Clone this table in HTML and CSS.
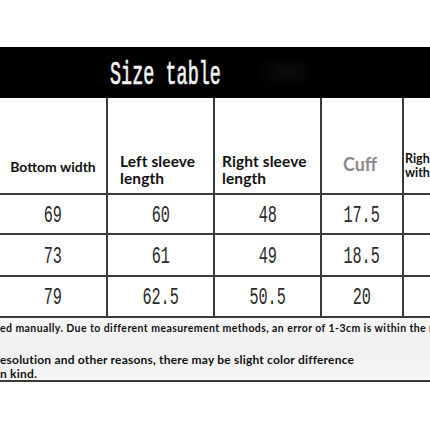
FILE: index.html
```html
<!DOCTYPE html>
<html>
<head>
<meta charset="utf-8">
<link rel="stylesheet" href="styles.css">
</head>
<body>
<div class="page">
  <div class="spacer"></div>
  <div class="titlebar"><span class="title">Size table</span><span class="smudge"></span></div>
  <div class="grid">
    <div class="cell head c1"><span class="h-sm">Bottom width</span></div>
    <div class="cell head c2"><span class="h-md">Left sleeve<br>length</span></div>
    <div class="cell head c3"><span class="h-md">Right sleeve<br>length</span></div>
    <div class="cell head c4"><span class="h-cuff">Cuff</span></div>
    <div class="cell head c5"><span class="h-xs">Righ<br>with</span></div>

    <div class="cell num"><span class="d">69</span></div>
    <div class="cell num"><span class="d">60</span></div>
    <div class="cell num"><span class="d">48</span></div>
    <div class="cell num"><span class="d">17.5</span></div>
    <div class="cell num"></div>

    <div class="cell num"><span class="d">73</span></div>
    <div class="cell num"><span class="d">61</span></div>
    <div class="cell num"><span class="d">49</span></div>
    <div class="cell num"><span class="d">18.5</span></div>
    <div class="cell num"></div>

    <div class="cell num"><span class="d">79</span></div>
    <div class="cell num"><span class="d">62.5</span></div>
    <div class="cell num"><span class="d">50.5</span></div>
    <div class="cell num"><span class="d">20</span></div>
    <div class="cell num"></div>
  </div>
  <div class="notes">
    <p class="n1">ed manually. Due to different measurement methods, an error of 1-3cm is within the n</p>
    <p class="n2">esolution and other reasons, there may be slight color difference<br>n kind.</p>
  </div>
</div>
</body>
</html>
```
FILE: styles.css
```css
html, body {
  margin: 0;
  padding: 0;
  background: #ffffff;
  width: 430px;
  height: 430px;
  overflow: hidden;
}
.page {
  width: 430px;
  overflow: hidden;
}
.spacer {
  height: 47px;
}
.titlebar {
  height: 51px;
  background: #000;
  display: flex;
  align-items: center;
  padding-left: 110px;
  box-sizing: border-box;
  position: relative;
}
.title {
  display: inline-block;
  font-family: "Liberation Mono", monospace;
  font-weight: 400;
  font-size: 33px;
  color: #f2f2f2;
  -webkit-text-stroke: 0.7px #f2f2f2;
  line-height: 1;
  margin-top: 6px;
  transform: scaleX(0.56);
  transform-origin: left center;
  white-space: nowrap;
}
.smudge {
  position: absolute;
  left: 255px;
  top: 8px;
  width: 64px;
  height: 34px;
  background: radial-gradient(ellipse at center, rgba(50,50,50,0.25), rgba(0,0,0,0) 70%);
}
.grid {
  display: grid;
  grid-template-columns: 106px 105px 105px 80px 60px;
  grid-template-rows: 95px 38px 40px 39px;
  gap: 2px;
  background: #3a3a3a;
  width: 460px;
  padding-bottom: 2px;
}
.cell {
  background: #fff;
  display: flex;
}
.head {
  font-family: Lato, "Liberation Sans", sans-serif;
  font-weight: 700;
  color: #111;
}
.c1 {
  justify-content: center;
  align-items: flex-start;
  padding-top: 60px;
}
.h-sm {
  font-size: 14px;
  line-height: 17px;
}
.c2 {
  padding: 55px 0 0 12px;
}
.c3 {
  padding: 55px 0 0 7px;
}
.h-md {
  font-size: 15.5px;
  line-height: 17px;
  letter-spacing: 0.1px;
}
.c4 {
  justify-content: center;
  padding: 56px 4px 0 0;
}
.h-cuff {
  font-size: 18px;
  color: #8a8a8a;
  line-height: 20px;
}
.c5 {
  padding: 54px 0 0 1px;
}
.h-xs {
  font-size: 12.5px;
  line-height: 14px;
}
.num {
  justify-content: center;
  align-items: center;
  padding-top: 4px;
  box-sizing: border-box;
}
.d {
  display: inline-block;
  font-family: "Liberation Mono", monospace;
  font-size: 23px;
  color: #2a2a2a;
  line-height: 1;
  transform: scaleX(0.66);
  white-space: nowrap;
}
.notes {
  height: 62px;
  background: linear-gradient(180deg, #f6f6f6 0%, #f1f1f1 60%, #f7f7f7 100%);
  border-bottom: 2px solid #3a3a3a;
  font-family: Lato, "Liberation Sans", sans-serif;
  font-weight: 700;
  color: #111;
  white-space: nowrap;
  overflow: hidden;
}
.notes p {
  margin: 0;
}
.n1 {
  font-size: 10.5px;
  letter-spacing: 0.42px;
  line-height: 14px;
  padding-top: 3px;
}
.n2 {
  font-size: 12px;
  letter-spacing: 0.2px;
  line-height: 14px;
  padding-top: 18px;
}
```
